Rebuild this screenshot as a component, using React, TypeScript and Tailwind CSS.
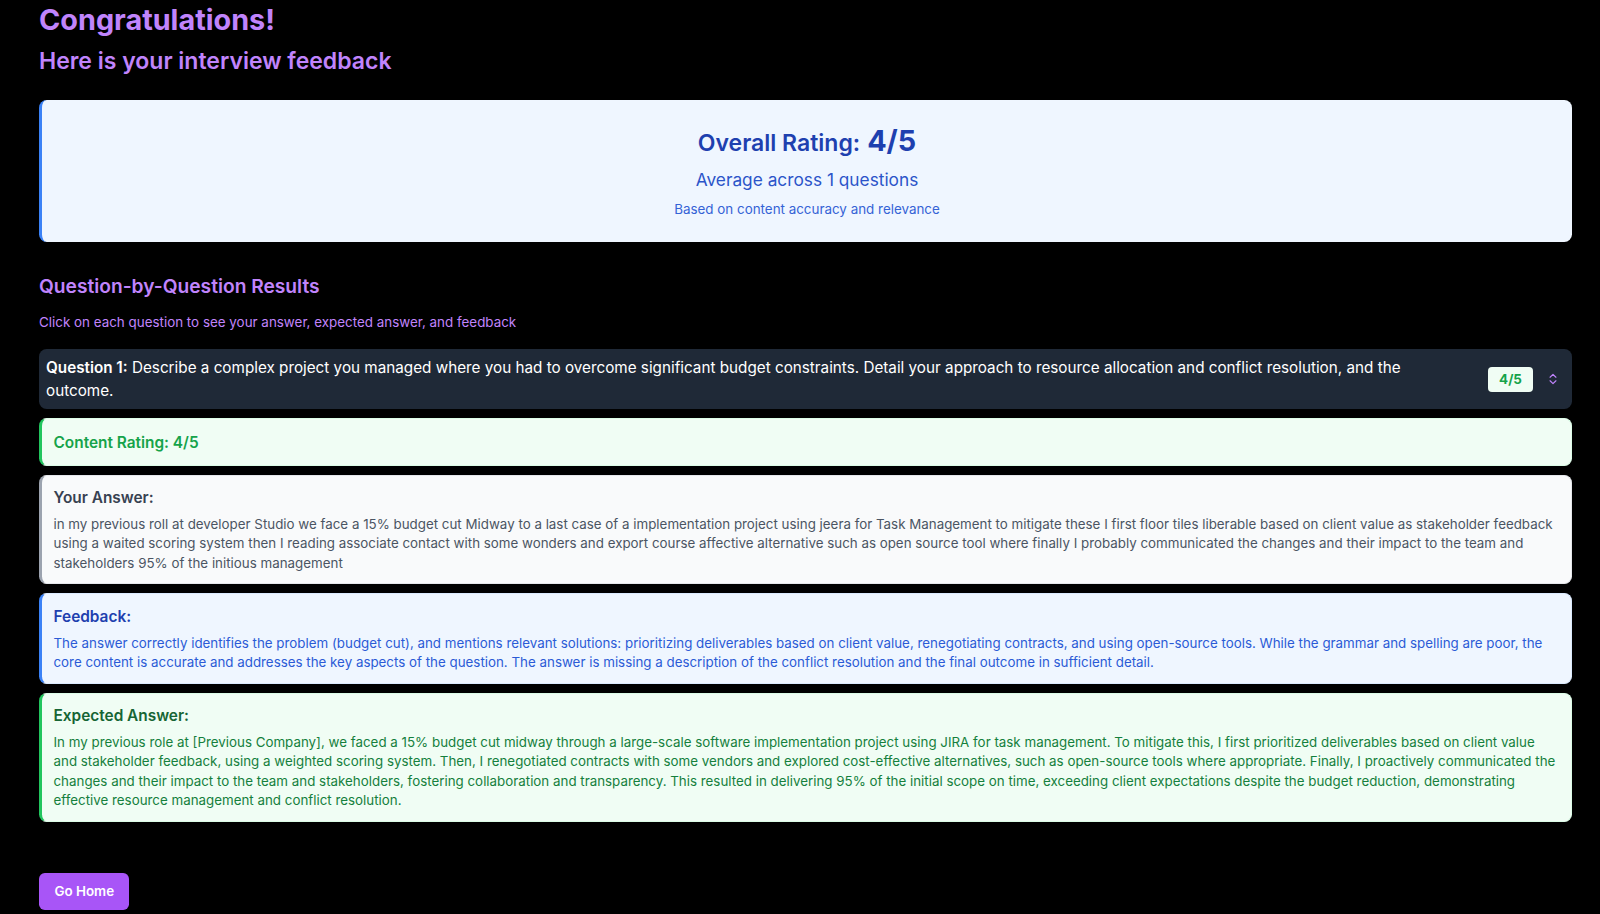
import { ChevronsUpDown } from 'lucide-react';

const answerText =
  'in my previous roll at developer Studio we face a 15% budget cut Midway to a last case of a implementation project using jeera for Task Management to mitigate these I first floor tiles liberable based on client value as stakeholder feedback using a waited scoring system then I reading associate contact with some wonders and export course affective alternative such as open source tool where finally I probably communicated the changes and their impact to the team and stakeholders 95% of the initious management';

const feedbackText =
  'The answer correctly identifies the problem (budget cut), and mentions relevant solutions: prioritizing deliverables based on client value, renegotiating contracts, and using open-source tools. While the grammar and spelling are poor, the core content is accurate and addresses the key aspects of the question. The answer is missing a description of the conflict resolution and the final outcome in sufficient detail.';

const expectedText =
  'In my previous role at [Previous Company], we faced a 15% budget cut midway through a large-scale software implementation project using JIRA for task management. To mitigate this, I first prioritized deliverables based on client value and stakeholder feedback, using a weighted scoring system. Then, I renegotiated contracts with some vendors and explored cost-effective alternatives, such as open-source tools where appropriate. Finally, I proactively communicated the changes and their impact to the team and stakeholders, fostering collaboration and transparency. This resulted in delivering 95% of the initial scope on time, exceeding client expectations despite the budget reduction, demonstrating effective resource management and conflict resolution.';

export default function App() {
  return (
    <div className="min-h-screen bg-black font-['Inter','Liberation_Sans',sans-serif] pl-[39px] pr-[28px] pt-[3px]">
      <h1 className="text-[28.8px] font-bold text-[#c084fc] leading-[34.5px]">Congratulations!</h1>
      <h2 className="mt-[8px] text-[23px] font-semibold text-[#c084fc] leading-[30.7px]">Here is your interview feedback</h2>

      <div className="mt-[24px] h-[142px] rounded-[7.7px] border-l-[3px] border-[#3b82f6] bg-[#eff6ff] pt-[23.5px] text-center">
        <div className="flex items-baseline justify-center gap-[7px] leading-[34.5px] text-[#1e40af]">
          <span className="text-[23px] font-semibold">Overall Rating:</span>
          <span className="text-[28.8px] font-bold">4/5</span>
        </div>
        <p className="mt-[6.5px] text-[17.3px] leading-[26.5px] text-[#2b54c9]">Average across 1 questions</p>
        <p className="mt-[6.5px] text-[13.4px] leading-[19.2px] text-[#3563d6]">Based on content accuracy and relevance</p>
      </div>

      <h3 className="mt-[30.6px] text-[19.2px] leading-[26.9px] font-semibold text-[#c084fc]">Question-by-Question Results</h3>
      <p className="mt-[13.5px] text-[13.4px] leading-[19.2px] text-[#c084fc]">Click on each question to see your answer, expected answer, and feedback</p>

      <div className="mt-[16.8px] flex flex-col gap-[9px]">
        <div className="flex items-center rounded-[7.7px] bg-[#1f2937] px-[7px] py-[7px] text-white">
          <p className="flex-1 pr-[22px] text-[15.25px] leading-[23px]">
            <span className="font-semibold">Question 1:</span> Describe a complex project you managed where you had to overcome significant budget constraints. Detail your approach to resource allocation and conflict resolution, and the outcome.
          </p>
          <span className="flex h-[25px] w-[45px] items-center justify-center rounded-[4px] bg-[#f0fdf4] text-[13.4px] font-bold text-[#16a34a]">4/5</span>
          <ChevronsUpDown className="ml-[13px] mr-[5px] h-[14px] w-[14px] text-[#c084fc]" />
        </div>

        <div className="rounded-[7.7px] border border-l-[3px] border-[#dcfce7] border-l-[#22c55e] bg-[#f0fdf4] px-[11.5px] py-[11.5px]">
          <p className="text-[15.4px] leading-[23px] font-semibold text-[#16a34a]">Content Rating: 4/5</p>
        </div>

        <div className="rounded-[7.7px] border border-l-[3px] border-[#e5e7eb] border-l-[#9ca3af] bg-[#f9fafb] px-[11.5px] pt-[10px] pb-[10.5px]">
          <p className="text-[15.4px] leading-[23px] font-semibold text-[#374151]">Your Answer:</p>
          <p className="mt-[6px] text-[13.35px] leading-[19.2px] text-[#4b5563]">{answerText}</p>
        </div>

        <div className="rounded-[7.7px] border border-l-[3px] border-[#dbeafe] border-l-[#3b82f6] bg-[#eff6ff] px-[11.5px] pt-[10.5px] pb-[10.5px]">
          <p className="text-[15.4px] leading-[23px] font-semibold text-[#1e40af]">Feedback:</p>
          <p className="mt-[6px] text-[13.35px] leading-[19.2px] text-[#2b5bd6]">{feedbackText}</p>
        </div>

        <div className="rounded-[7.7px] border border-l-[3px] border-[#dcfce7] border-l-[#22c55e] bg-[#f0fdf4] px-[11.5px] pt-[10.5px] pb-[10.5px]">
          <p className="text-[15.4px] leading-[23px] font-semibold text-[#166534]">Expected Answer:</p>
          <p className="mt-[6px] text-[13.35px] leading-[19.2px] text-[#15803d]">{expectedText}</p>
        </div>
      </div>

      <button className="mt-[51px] h-[37px] rounded-[5.8px] bg-[#a855f7] px-[15.4px] text-[13.4px] font-semibold text-white">Go Home</button>
    </div>
  );
}
